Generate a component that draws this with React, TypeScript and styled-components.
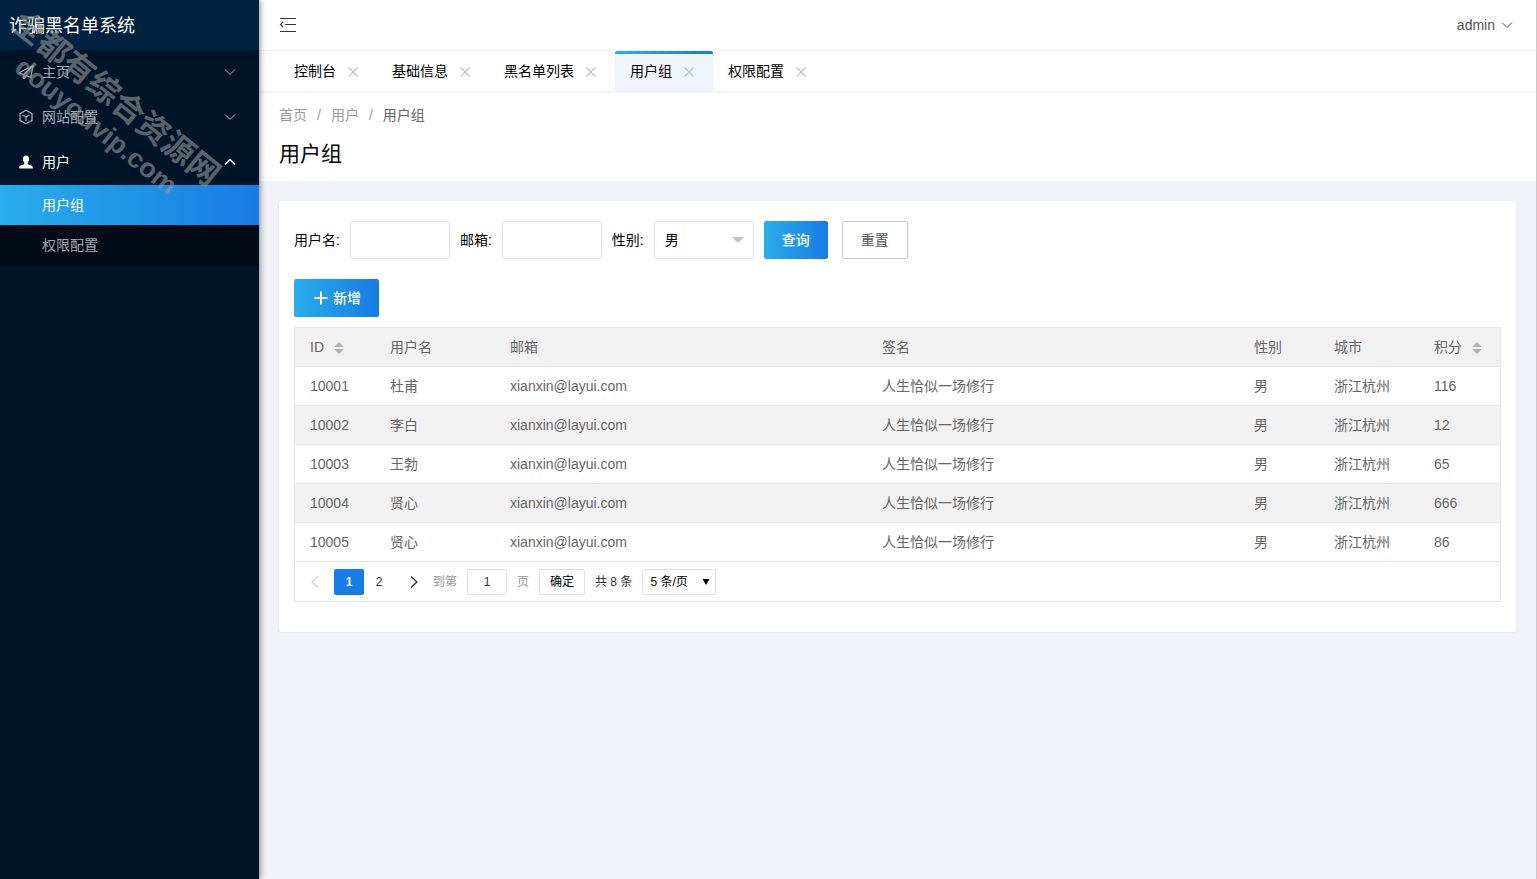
import React from 'react';
import styled, { createGlobalStyle, css } from 'styled-components';

const GRADIENT = 'linear-gradient(to right, #29adeb, #177ce3)';
const LINE = '#e6e6e6';

const GlobalStyle = createGlobalStyle`
  * { box-sizing: border-box; }
  html, body, #root { height: 100%; }
  body {
    margin: 0;
    background: #f0f2f7;
    color: #000;
    font: 14px/24px 'Liberation Sans', 'Noto Sans CJK SC', sans-serif;
  }
  button, input, select { font: inherit; color: inherit; margin: 0; }
  button { cursor: pointer; }
  a { color: inherit; text-decoration: none; }
  ul, ol { list-style: none; margin: 0; padding: 0; }
`;

const Shell = styled.div`
  display: flex;
  min-height: 100%;
  border-right: 1px solid #ccc;
`;

const Sidebar = styled.aside`
  position: relative;
  z-index: 2;
  flex: 0 0 259px;
  background: #001428;
  color: #fff;
  box-shadow: 1px 0 6px rgba(0, 21, 41, 0.5);
`;

const Brand = styled.h1`
  margin: 0;
  height: 50px;
  padding-left: 9px;
  background: #002140;
  font-size: 18px;
  font-weight: 400;
  line-height: 52px;
`;

const NavButton = styled.button<{ $open?: boolean }>`
  display: flex;
  align-items: center;
  width: 100%;
  height: 45px;
  padding: 0 23px 2px 18px;
  border: 0;
  background: none;
  text-align: left;
  color: ${p => (p.$open ? '#fff' : 'rgba(255, 255, 255, 0.65)')};
  svg:last-child { margin-left: auto; }
`;

const NavText = styled.span`
  margin-left: 8px;
`;

const SubNav = styled.ul`
  background: #000b15;
`;

const SubLink = styled.a<{ $active?: boolean }>`
  display: block;
  height: 40px;
  padding-left: 42px;
  line-height: 40px;
  color: rgba(255, 255, 255, 0.65);
  ${p => p.$active && css`background: ${GRADIENT}; color: #fff;`}
`;

const Watermark = styled.div`
  position: absolute;
  left: 28px;
  top: 4px;
  transform: rotate(39deg);
  transform-origin: 0 0;
  color: rgba(153, 153, 153, 0.6);
  font-weight: 700;
  white-space: nowrap;
  pointer-events: none;
`;

const WatermarkName = styled.div`
  font-size: 32px;
  line-height: 36px;
`;

const WatermarkSite = styled.div`
  padding-left: 30px;
  font-size: 27px;
  line-height: 32px;
`;

const Main = styled.div`
  flex: 1;
  min-width: 0;
`;

const TopBar = styled.header`
  display: flex;
  align-items: center;
  justify-content: space-between;
  height: 51px;
  padding: 0 23px 0 20px;
  background: #fff;
  border-bottom: 1px solid #f2f2f2;
`;

const PlainButton = styled.button`
  display: flex;
  align-items: center;
  gap: 6px;
  padding: 0;
  border: 0;
  background: none;
  color: #555;
`;

const Tabs = styled.nav`
  position: relative;
  display: flex;
  height: 41px;
  padding-left: 20px;
  background: #fff;
  border-bottom: 1px solid #f0f0f0;
  box-shadow: 0 1px 2px rgba(0, 0, 0, 0.05);
`;

const Tab = styled.div<{ $active?: boolean }>`
  display: flex;
  align-items: center;
  gap: 10px;
  height: 40px;
  padding: 0 18px 0 15px;
  border-radius: 2px 2px 0 0;
  ${p => p.$active && css`background: ${GRADIENT} top / 100% 3px no-repeat #eff4fc;`}
`;

const TabClose = styled.button`
  display: flex;
  width: 13px;
  padding: 2px 1px 0 2px;
  border: 0;
  background: none;
  color: #c2c2c2;
`;

const PageHead = styled.div`
  height: 89px;
  padding: 11px 20px 0;
  background: #fff;
`;

const Crumbs = styled.ol`
  display: flex;
  gap: 10px;
  color: #999;
  li:last-child { color: #666; }
`;

const PageTitle = styled.h2`
  margin: 12px 0 0;
  font-size: 21px;
  font-weight: 400;
  line-height: 30px;
`;

const Card = styled.section`
  margin: 20px;
  padding: 20px 15px 30px;
  background: #fff;
  border-radius: 2px;
  box-shadow: 0 1px 2px rgba(0, 0, 0, 0.05);
`;

const Filters = styled.form`
  display: flex;
  align-items: center;
  gap: 10px;
`;

const Field = styled.label`
  display: flex;
  align-items: center;
  gap: 10px;
`;

const control = css`
  height: 38px;
  border: 1px solid ${LINE};
  border-radius: 2px;
  background: #fff;
`;

const TextInput = styled.input`
  ${control}
  width: 100px;
  padding: 0 10px;
`;

const SelectBox = styled.span`
  display: grid;
  align-items: center;
  > * { grid-area: 1 / 1; }
  > svg { justify-self: end; margin-right: 10px; pointer-events: none; }
`;

const Select = styled.select`
  ${control}
  appearance: none;
  width: 100px;
  padding: 0 10px;
`;

const Button = styled.button<{ $kind: 'primary' | 'plain' }>`
  display: flex;
  align-items: center;
  gap: 5px;
  height: 38px;
  padding: 0 18px;
  border-radius: 2px;
  border: 0;
  ${p => p.$kind === 'primary'
    ? css`background: ${GRADIENT}; color: #fff; font-weight: 500;`
    : css`background: #fff; border: 1px solid #c9c9c9; color: #555; margin-left: 4px;`}
`;

const Toolbar = styled.div`
  display: flex;
  margin: 20px 0 10px;
`;

const Panel = styled.div`
  border: 1px solid ${LINE};
`;

const Table = styled.table`
  width: 100%;
  table-layout: fixed;
  border-collapse: separate;
  border-spacing: 0;
  color: #666;
`;

const Col = styled.col<{ $w?: number }>`
  ${p => p.$w && css`width: ${p.$w}px;`}
`;

const Cell = styled.td`
  height: 39px;
  padding: 0 15px;
  border-bottom: 1px solid ${LINE};
  text-align: left;
  font-weight: 400;
  white-space: nowrap;
`;

const Row = styled.tr<{ $shade?: boolean }>`
  background: ${p => (p.$shade ? '#f1f1f1' : '#fff')};
`;

const SortHead = styled.span`
  display: flex;
  align-items: center;
  gap: 10px;
  svg { margin-top: 2px; }
`;

const Pager = styled.div`
  display: flex;
  align-items: center;
  height: 39px;
  font-size: 12px;
  color: #333;
`;

const PageButton = styled.button<{ $current?: boolean; $wide?: boolean }>`
  display: flex;
  align-items: center;
  justify-content: center;
  width: ${p => (p.$wide ? 39 : 30)}px;
  height: 26px;
  padding: 0;
  border: 0;
  border-radius: 2px;
  background: ${p => (p.$current ? '#177ce3' : 'none')};
  ${p => p.$current && css`color: #fff; font-weight: 700;`}
  &:disabled { color: #d2d2d2; }
`;

const PagerItems = styled.div`
  display: flex;
  align-items: center;
  gap: 10px;
`;

const Jump = styled.label`
  display: flex;
  align-items: center;
  gap: 10px;
  color: #999;
`;

const small = css`
  height: 26px;
  border: 1px solid #e2e2e2;
  border-radius: 2px;
  background: #fff;
`;

const JumpInput = styled.input`
  ${small}
  width: 40px;
  text-align: center;
  color: #333;
`;

const JumpButton = styled.button`
  ${small}
  width: 46px;
  padding: 0;
  color: #000;
`;

const LimitBox = styled(SelectBox)`
  > svg { margin-right: 6px; }
`;

const Limit = styled.select`
  ${small}
  appearance: none;
  width: 74px;
  padding: 0 7px;
  color: #000;
`;

const Chevron = ({ up, size = 12 }: { up?: boolean; size?: number }) => (
  <svg width={size} height="8" viewBox="0 0 12 8" fill="none" stroke="currentColor" strokeWidth={up ? 1.5 : 1}>
    <path d={up ? 'M1 6.5 6 1.5l5 5' : 'M1 1.5l5 5 5-5'} />
  </svg>
);

const Plane = () => (
  <svg width="16" height="16" viewBox="0 0 16 16" fill="none" stroke="currentColor" strokeWidth="1.2" strokeLinejoin="round">
    <path d="M.8 9 15 1.500 12.800 13.500 8.300 11.500 5.800 14.500V10.500L15 1.500M.8 9 5.800 10.500" />
  </svg>
);

const Cube = () => (
  <svg width="16" height="16" viewBox="0 0 16 16" fill="none" stroke="currentColor" strokeWidth="1.3" strokeLinejoin="round">
    <path d="M8 1.2 14 4.6v6.8L8 14.8 2 11.4V4.6ZM4.5 6 8 8l3.5-2M8 8v4" />
  </svg>
);

const Person = () => (
  <svg width="16" height="16" viewBox="0 0 16 16" fill="currentColor">
    <path d="M8 1.5C10.200 1.500 11.100 3 11.100 5.100 11.100 6.600 10.500 7.900 9.700 8.700V10.200C11 11 14.700 11 14.700 13V14.500H1.300V13C1.300 11 5 11 6.300 10.200V8.700C5.500 7.900 4.900 6.600 4.900 5.100 4.900 3 5.800 1.500 8 1.500Z" />
  </svg>
);

const MenuFold = () => (
  <svg width="17" height="16" viewBox="0 0 17 16" fill="none" stroke="#333" strokeWidth="1.1">
    <path d="M1 1.500H17M6 7.500H17M1 14.500H17M4 5 1.500 7.500 4 10" />
  </svg>
);

const Cross = () => (
  <svg width="10" height="10" viewBox="0 0 10 10" stroke="currentColor" strokeWidth="1.1">
    <path d="M.5.500 9.500 9.500M9.500.500.500 9.500" />
  </svg>
);

const Caret = () => (
  <svg width="12" height="6" viewBox="0 0 12 6" fill="#c2c2c2"><path d="M0 0h12L6 6Z" /></svg>
);

const SmallCaret = () => (
  <svg width="8" height="6" viewBox="0 0 8 6" fill="#000"><path d="M.5 0h7L4 6Z" /></svg>
);

const Sort = () => (
  <svg width="10" height="12" viewBox="0 0 10 12" fill="#b2b2b2"><path d="M0 5h10L5 0ZM0 7h10l-5 5Z" /></svg>
);

const Plus = () => (
  <svg width="16" height="14" viewBox="0 0 16 14" stroke="currentColor" strokeWidth="2"><path d="M9 .5v13M2.500 7h13" /></svg>
);

const Arrow = ({ left }: { left?: boolean }) => (
  <svg width="8" height="12" viewBox="0 0 8 12" fill="none" stroke="currentColor" strokeWidth="1.3">
    <path d={left ? 'M7 .5 1 6l6 5.500' : 'M1 .5 7 6l-6 5.500'} />
  </svg>
);

const tabs = ['控制台', '基础信息', '黑名单列表', '用户组', '权限配置'];
const rows = [
  ['10001', '杜甫', '116'],
  ['10002', '李白', '12'],
  ['10003', '王勃', '65'],
  ['10004', '贤心', '666'],
  ['10005', '贤心', '86'],
];

export default function App() {
  return (
    <>
      <GlobalStyle />
      <Shell>
        <Sidebar>
          <Brand>诈骗黑名单系统</Brand>
          <nav>
            <NavButton><Plane /><NavText>主页</NavText><Chevron /></NavButton>
            <NavButton><Cube /><NavText>网站配置</NavText><Chevron /></NavButton>
            <NavButton $open><Person /><NavText>用户</NavText><Chevron up /></NavButton>
            <SubNav>
              <li><SubLink href="#group" $active>用户组</SubLink></li>
              <li><SubLink href="#auth">权限配置</SubLink></li>
            </SubNav>
          </nav>
          <Watermark>
            <WatermarkName>全都有综合资源网</WatermarkName>
            <WatermarkSite>douyouvip.com</WatermarkSite>
          </Watermark>
        </Sidebar>
        <Main>
          <TopBar>
            <PlainButton aria-label="收起菜单"><MenuFold /></PlainButton>
            <PlainButton>admin<Chevron /></PlainButton>
          </TopBar>
          <Tabs>
            {tabs.map(t => (
              <Tab key={t} $active={t === '用户组'}>
                <a href="#tab">{t}</a>
                <TabClose aria-label={`关闭${t}`}><Cross /></TabClose>
              </Tab>
            ))}
          </Tabs>
          <PageHead>
            <Crumbs>
              <li><a href="#home">首页</a></li>
              <li>/</li>
              <li><a href="#user">用户</a></li>
              <li>/</li>
              <li>用户组</li>
            </Crumbs>
            <PageTitle>用户组</PageTitle>
          </PageHead>
          <Card>
            <Filters onSubmit={e => e.preventDefault()}>
              <Field>用户名:<TextInput name="username" /></Field>
              <Field>邮箱:<TextInput name="email" /></Field>
              <Field>
                性别:
                <SelectBox>
                  <Select name="sex" defaultValue="男"><option>男</option><option>女</option></Select>
                  <Caret />
                </SelectBox>
              </Field>
              <Button $kind="primary" type="submit">查询</Button>
              <Button $kind="plain" type="reset">重置</Button>
            </Filters>
            <Toolbar>
              <Button $kind="primary" type="button"><Plus />新增</Button>
            </Toolbar>
            <Panel>
              <Table>
                <colgroup>
                  <Col $w={80} /><Col $w={120} /><Col /><Col /><Col $w={80} /><Col $w={100} /><Col $w={81} />
                </colgroup>
                <thead>
                  <Row $shade>
                    <Cell as="th"><SortHead>ID<Sort /></SortHead></Cell>
                    <Cell as="th">用户名</Cell>
                    <Cell as="th">邮箱</Cell>
                    <Cell as="th">签名</Cell>
                    <Cell as="th">性别</Cell>
                    <Cell as="th">城市</Cell>
                    <Cell as="th"><SortHead>积分<Sort /></SortHead></Cell>
                  </Row>
                </thead>
                <tbody>
                  {rows.map(([id, name, score], i) => (
                    <Row key={id} $shade={i % 2 === 1}>
                      <Cell>{id}</Cell>
                      <Cell>{name}</Cell>
                      <Cell>xianxin@layui.com</Cell>
                      <Cell>人生恰似一场修行</Cell>
                      <Cell>男</Cell>
                      <Cell>浙江杭州</Cell>
                      <Cell>{score}</Cell>
                    </Row>
                  ))}
                </tbody>
              </Table>
              <Pager>
                <PageButton $wide disabled aria-label="上一页"><Arrow left /></PageButton>
                <PageButton $current>1</PageButton>
                <PageButton>2</PageButton>
                <PageButton $wide aria-label="下一页"><Arrow /></PageButton>
                <PagerItems>
                  <Jump>到第<JumpInput defaultValue="1" />页</Jump>
                  <JumpButton type="button">确定</JumpButton>
                  <span>共 8 条</span>
                  <LimitBox>
                    <Limit aria-label="每页条数"><option>5 条/页</option><option>10 条/页</option></Limit>
                    <SmallCaret />
                  </LimitBox>
                </PagerItems>
              </Pager>
            </Panel>
          </Card>
        </Main>
      </Shell>
    </>
  );
}
